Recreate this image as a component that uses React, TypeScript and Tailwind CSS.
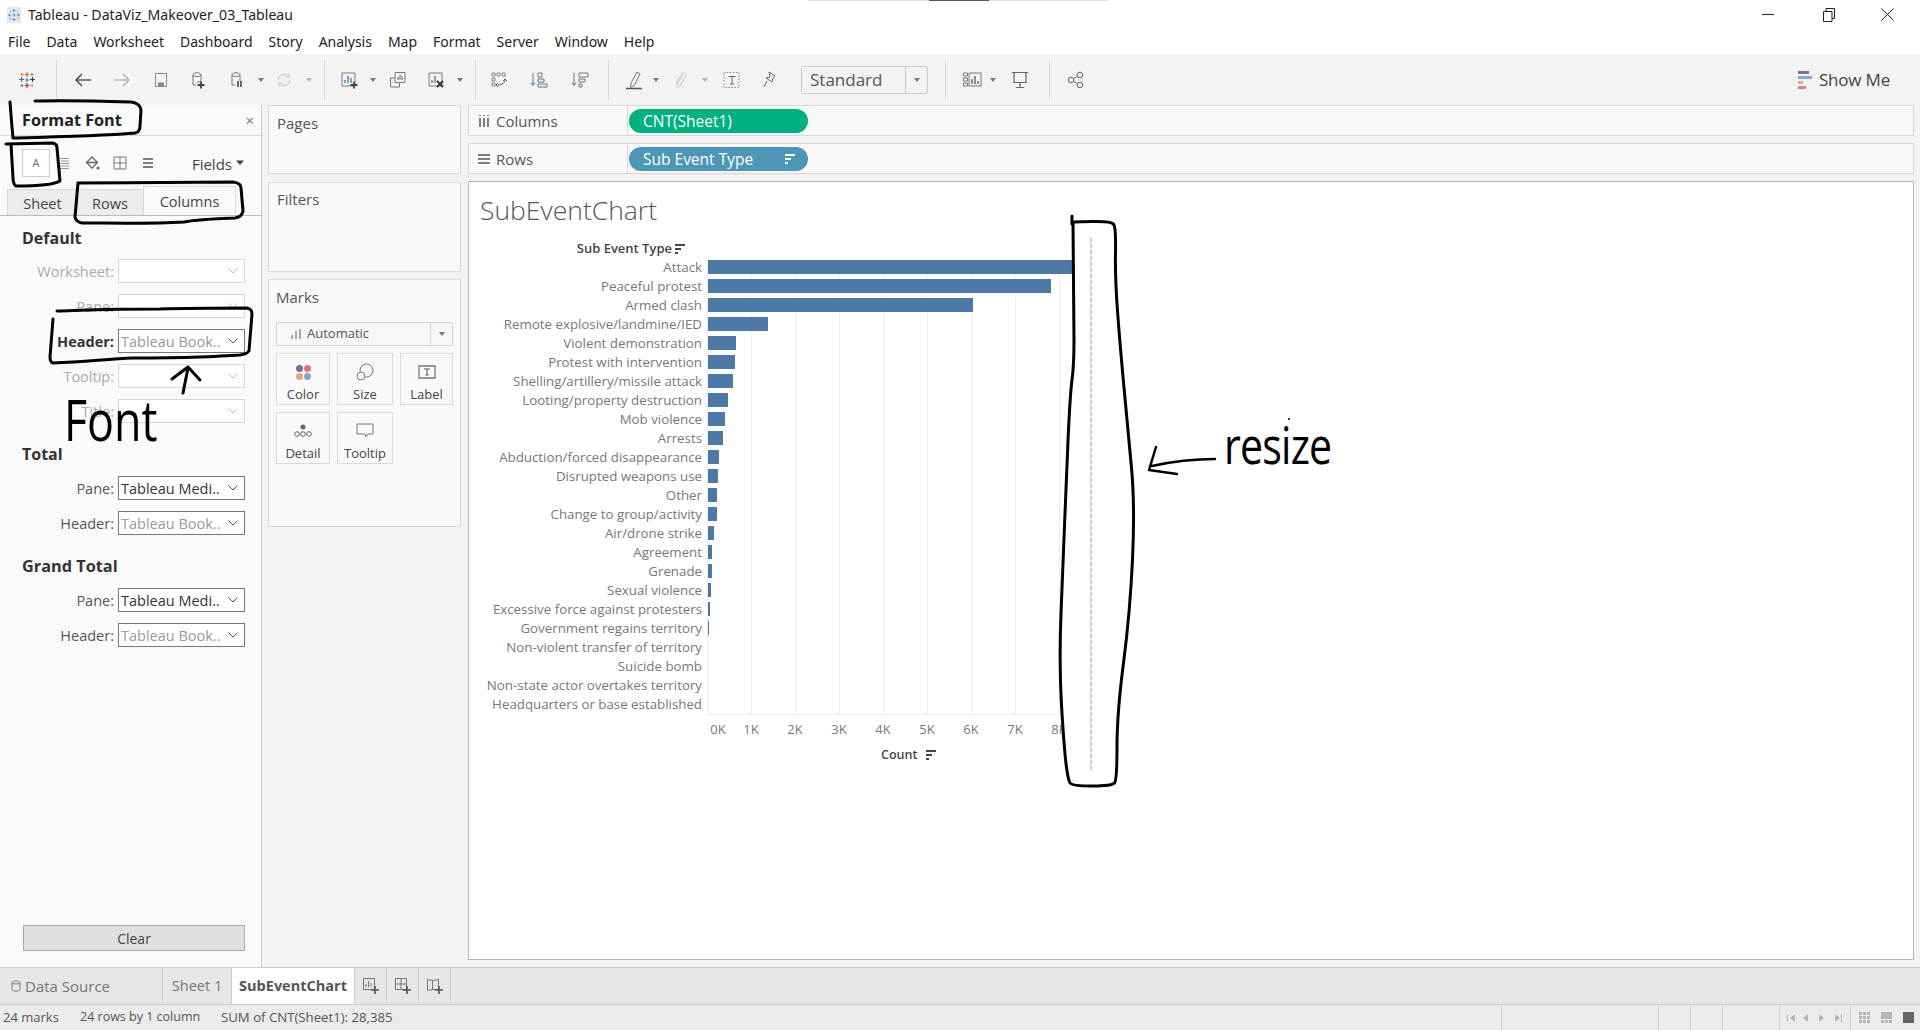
import React from "react";

const uiFont = "font-['Noto_Sans','Open_Sans',sans-serif]";
const tabFont = "font-['Open_Sans','Noto_Sans',sans-serif]";

const G = ({ children, className = "", w = 20, h = 20 }: { children: React.ReactNode; className?: string; w?: number; h?: number }) => (
  <svg width={w} height={h} viewBox={`0 0 ${w} ${h}`} fill="none" stroke="#666" strokeWidth="1" className={"shrink-0 " + className}>
    {children}
  </svg>
);

const Drop = ({ className = "" }: { className?: string }) => (
  <svg width="8" height="6" viewBox="0 0 8 6" className={"shrink-0 " + className}>
    <path d="M1 1h6L4 5z" fill="#777" />
  </svg>
);

const Sep = ({ className = "" }: { className?: string }) => <div className={"h-[40px] w-px bg-[#d6d6d6] shrink-0 " + className} />;

const Logo = () => (
  <G>
    <g strokeWidth="1.2">
      <path d="M10 2v5M7.700 4.500h4.600" stroke="#e8762d" />
      <path d="M10 13v5M7.700 15.500h4.600" stroke="#c72037" />
      <path d="M4.500 7v5M2 9.500h5" stroke="#5b6591" />
      <path d="M15.500 7v5M13 9.500h5" stroke="#1f447d" />
      <path d="M10 8v4M8 10h4" stroke="#5b879b" />
      <path d="M5 3v3M3.500 4.500h3" stroke="#eb912b" />
      <path d="M15 3v3M13.500 4.500h3" stroke="#7099a6" />
      <path d="M5 14v3M3.500 15.500h3" stroke="#59879b" />
      <path d="M15 14v3M13.500 15.500h3" stroke="#d7a32b" />
    </g>
  </G>
);

const TitleIcon = () => (
  <div className="w-[14px] h-[16px] bg-[#e4e7ea] flex items-center justify-center shrink-0">
    <svg width="12" height="12" viewBox="0 0 12 12" stroke="#4f9fc0" strokeWidth="1" fill="none">
      <path d="M6 0v3M4.500 1.500h3M6 9v3M4.500 10.500h3M0 6h3M1.500 4.500v3M9 6h3M10.500 4.500v3M6 4.500v3M4.500 6h3M2 2l1 1M9 2l1 1M2 10l1-1M9 10l1-1" />
    </svg>
  </div>
);

const Plus = ({ x = 12, y = 13 }: { x?: number; y?: number }) => (
  <path d={`M${x} ${y - 3.5}v7M${x - 3.5} ${y}h7`} stroke="#444" strokeWidth="1.8" />
);

const Toolbar = () => (
  <div className="h-[51px] bg-[#f3f3f3] flex items-center shrink-0">
    <div className="ml-[17px]"><Logo /></div>
    <Sep className="ml-[19px]" />
    <G className="ml-[16px]"><path d="M18 10H3M9 4l-6 6 6 6" stroke="#555" strokeWidth="1.6" /></G>
    <G className="ml-[19px]"><path d="M2 10h15M11 4l6 6-6 6" stroke="#bbb" strokeWidth="1.6" /></G>
    <G className="ml-[19px]"><path d="M4.500 3.500h11v13h-11z" stroke="#888" /><path d="M7 12.500h6v4H7z" fill="#888" stroke="none" /></G>
    <G className="ml-[17px]"><path d="M5 5c0-3 8-3 8 0v7H9M5 5v10h3M5 5c1 2 7 2 8 0" stroke="#777" /><Plus x={13} y={15} /></G>
    <G className="ml-[19px]"><path d="M5 5c0-3 8-3 8 0v6M5 5v10h3M5 5c1 2 7 2 8 0" stroke="#777" /><path d="M11 11v6M14 11v6" stroke="#444" strokeWidth="1.6" /></G>
    <Drop className="ml-[10px]" />
    <G className="ml-[9px]"><path d="M4 10a6 6 0 0 1 11-3M16 10a6 6 0 0 1-11 3M15 3v4h-4M5 17v-4h4" stroke="#c4c4c4" /></G>
    <Drop className="ml-[11px] opacity-50" />
    <Sep className="ml-[11px]" />
    <G className="ml-[14px]"><path d="M3 3h13v13H3z" stroke="#777" /><path d="M6 13v-3M9 13V6M12 13V8" stroke="#4c7ba8" strokeWidth="1.4" /><Plus x={15} y={15} /></G>
    <Drop className="ml-[10px]" />
    <G className="ml-[11px]"><path d="M7 2.500h10v10H7zM7 8H2.500v9h9v-4.500" stroke="#777" /><path d="M10 10V7M12 10V4.500M14 10V6" stroke="#666" /></G>
    <G className="ml-[18px]"><path d="M3 3h13v13H3z" stroke="#777" /><path d="M6 13v-3M9 13V6" stroke="#4c7ba8" strokeWidth="1.4" /><path d="M11 11l6 6M17 11l-6 6" stroke="#333" strokeWidth="1.8" /></G>
    <Drop className="ml-[10px]" />
    <Sep className="ml-[11px]" />
    <G className="ml-[13px]"><path d="M3 3h3v3H3zM8 3h3v3H8zM13 3h3v3h-3zM3 8h3v3H3zM3 13h3v3H3z" stroke="#888" /><path d="M16 9c0 4-3 6-7 6M9 13l-2 2 2 2M14 11l2-2 2 2" stroke="#555" /></G>
    <G className="ml-[20px]"><path d="M4 3v12M2 12.500l2 3 2-3" stroke="#4c7ba8" /><path d="M9 3h4v4H9zM9 9h6v3H9zM9 14h9v3H9z" stroke="#777" /></G>
    <G className="ml-[21px]"><path d="M4 3v12M2 12.500l2 3 2-3" stroke="#4c7ba8" /><path d="M9 3h9v4H9zM9 9h6v3H9zM9 14h3v3H9z" stroke="#777" /></G>
    <Sep className="ml-[18px]" />
    <G className="ml-[15px]"><path d="M7 13L13 2l3 2-5.500 11-4 2.500z" stroke="#777" /><path d="M2 18.500h16" stroke="#555" strokeWidth="1.5" /></G>
    <Drop className="ml-[8px]" />
    <G className="ml-[10px]"><path d="M13 5l-6 9c-2 3 2 4 3 2l6-10c1-3-3-4-4-2l-6 9" stroke="#c2c2c2" /></G>
    <Drop className="ml-[11px] opacity-50" />
    <G className="ml-[13px]"><path d="M2 2.500h15v15H2z" stroke="#888" strokeDasharray="1.500 1.500" /><path d="M6.500 6.500h7M10 6.500v7.500M8 14h4" stroke="#666" /></G>
    <G className="ml-[17px]"><path d="M10 2l6 4-2 2-1 4-6-4 4-1zM8 11l-3 6" stroke="#666" /></G>
    <div className="ml-[22px] w-[127px] h-[28px] border border-[#ccc] rounded-[2px] flex items-center shrink-0">
      <span className={"flex-1 pl-[8px] text-[17px] text-[#555] " + tabFont}>Standard</span>
      <div className="w-[22px] h-full border-l border-[#ccc] flex items-center justify-center"><Drop /></div>
    </div>
    <Sep className="ml-[17px]" />
    <G className="ml-[16px]"><path d="M1.500 3h4v3h-4zM1.500 8h4v3h-4zM1.500 13h4v3h-4zM7 3h12v13H7z" stroke="#777" /><path d="M10 14V9M13 14V6M16 14v-3" stroke="#555" strokeWidth="1.3" /></G>
    <Drop className="ml-[7px]" />
    <G className="ml-[13px]"><path d="M2 2.500h16M4 2.500v10h12v-10M10 12.500v5M6 17.500h8" stroke="#666" strokeWidth="1.2" /></G>
    <Sep className="ml-[19px]" />
    <G className="ml-[16px]"><circle cx="5" cy="10" r="2.800" /><circle cx="14" cy="5" r="2.800" /><circle cx="14" cy="15" r="2.800" /><path d="M7.500 8.700l4-2.500M7.500 11.300l4 2.500" /></G>
    <div className="ml-auto mr-[30px] flex items-center gap-[7px]">
      <div className="flex flex-col w-[14px]">
        <div className="h-[3px] w-[11px] bg-[#7b6f94] mb-[2px]" />
        <div className="h-[3px] w-[14px] bg-[#86a8cc] mb-[2px]" />
        <div className="h-[3px] w-[5px] bg-[#e4a98c] mb-[2px]" />
        <div className="h-[3px] w-[8px] bg-[#e5788a]" />
      </div>
      <span className={"text-[17px] text-[#444] tracking-[-0.2px] " + tabFont}>Show Me</span>
    </div>
  </div>
);

const Row = ({ label, value, labelCls = "text-[#aaa]", dark = false }: { label: string; value?: string; labelCls?: string; dark?: boolean }) => (
  <div className="flex items-center h-[24px]">
    <span className={"w-[114px] pt-px text-right text-[14.500px] whitespace-nowrap " + labelCls}>{label}</span>
    <div className={"ml-[4px] w-[127px] h-[24px] bg-white border flex items-center justify-between pl-[2px] pr-[6px] " + (value ? "border-[#777]" : "border-[#d6d6d6]")}>
      <span className={"pt-px text-[14.500px] whitespace-nowrap " + (dark ? "text-[#333]" : "text-[#999]")}>{value}</span>
      <svg width="10" height="6" viewBox="0 0 10 6" fill="none" stroke={value ? "#555" : "#bbb"} className="shrink-0"><path d="M.5.500l4.500 4.500L9.500.5" /></svg>
    </div>
  </div>
);

const LeftPanel = () => (
  <div className={"w-[262px] shrink-0 bg-[#fafafa] border-r border-[#c9c9c9] flex flex-col " + tabFont}>
    <div className="h-[31px] border-b border-[#d8d8d8] flex items-center justify-between pl-[22px] pr-[7px] shrink-0">
      <span className="text-[16.200px] font-bold text-[#222]">Format Font</span>
      <span className="text-[15px] text-[#777] leading-none">×</span>
    </div>
    <div className="h-[49px] flex items-start pt-[13px] pl-[22px] pr-[16px] shrink-0">
      <div className="w-[28px] h-[28px] border border-[#ccc] bg-white flex items-center justify-center text-[11px] text-[#666]">A</div>
      <G w={12} h={14} className="ml-[8px] mt-[7px]"><path d="M1 2.500h10M3 5h8M1 7.500h10M3 10h8M1 12.500h10" stroke="#999" /></G>
      <G w={16} h={16} className="ml-[14px] mt-[6px]"><path d="M8 2l5.500 5.500L8 13 2.500 7.500zM2.500 7.500h11" stroke="#666" strokeWidth="1.300" /><circle cx="14" cy="13" r="1.500" fill="#666" stroke="none" /></G>
      <G w={14} h={14} className="ml-[13px] mt-[7px]"><path d="M1 1h12v12H1zM7 1v12M1 7h12" stroke="#777" /></G>
      <G w={14} h={14} className="ml-[14px] mt-[7px]"><path d="M2 3h10M2 7h10M2 11h10" stroke="#555" strokeWidth="1.600" /></G>
      <span className="ml-auto text-[15px] text-[#444] mt-[4px]">Fields</span>
      <svg width="10" height="6" viewBox="0 0 10 6" className="ml-[3px] mt-[11px] shrink-0"><path d="M1 .5h8L5 5z" fill="#444" /></svg>
    </div>
    <div className="h-[31px] border-b border-[#bbb] flex items-end pl-[7px] shrink-0">
      <div className="w-[70px] h-[26px] pt-[3px] bg-[#ececec] border-t border-l border-[#d8d8d8] flex items-center justify-center text-[14.500px] text-[#444]">Sheet</div>
      <div className="w-[66px] h-[26px] pt-[3px] bg-[#ececec] border-t border-[#d8d8d8] flex items-center justify-center text-[14.500px] text-[#444]">Rows</div>
      <div className="w-[93px] h-[29px] bg-[#fafafa] border-t border-x border-[#d8d8d8] flex items-center justify-center text-[14.500px] text-[#444] pt-[1px]">Columns</div>
    </div>
    <div className="h-[43px] flex items-center pl-[22px] text-[16px] font-bold text-[#333] shrink-0">Default</div>
    <div className="flex flex-col gap-[11px]">
      <Row label="Worksheet:" />
      <Row label="Pane:" />
      <Row label="Header:" value="Tableau Book.." labelCls="font-bold text-[#333]" />
      <Row label="Tooltip:" />
      <Row label="Title:" />
    </div>
    <div className="h-[53px] pt-[8px] flex items-center pl-[22px] text-[16px] font-bold text-[#333] shrink-0">Total</div>
    <div className="flex flex-col gap-[11px]">
      <Row label="Pane:" value="Tableau Medi.." labelCls="text-[#555]" dark />
      <Row label="Header:" value="Tableau Book.." labelCls="text-[#555]" />
    </div>
    <div className="h-[53px] pt-[10px] flex items-center pl-[22px] text-[16.300px] font-bold text-[#333] shrink-0">Grand Total</div>
    <div className="flex flex-col gap-[11px]">
      <Row label="Pane:" value="Tableau Medi.." labelCls="text-[#555]" dark />
      <Row label="Header:" value="Tableau Book.." labelCls="text-[#555]" />
    </div>
    <div className="mt-auto mb-[16px] ml-[23px] w-[222px] h-[26px] bg-[#e0e0e0] border border-[#aaa] flex items-center justify-center text-[14px] text-[#444]">Clear</div>
  </div>
);

const MarkBtn = ({ w, label, children }: { w: string; label: string; children: React.ReactNode }) => (
  <div className={"h-[52px] border border-[#d9d9d9] flex flex-col items-center pt-[7px] " + w}>
    <div className="h-[22px] flex items-center justify-center">{children}</div>
    <span className="mt-[3px] text-[13px] text-[#444] leading-[16px]">{label}</span>
  </div>
);

const MiddlePanel = () => (
  <div className={"w-[206px] shrink-0 bg-[#f3f3f3] flex flex-col pl-[6px] " + tabFont}>
    <div className="w-[193px] h-[69px] bg-[#f9f9f9] border border-[#d9d9d9] pl-[8px] pt-[6px] text-[15px] text-[#555] shrink-0">Pages</div>
    <div className="mt-[8px] w-[193px] h-[90px] bg-[#f9f9f9] border border-[#d9d9d9] pl-[8px] pt-[5px] text-[15px] text-[#555] shrink-0">Filters</div>
    <div className="mt-[7px] w-[193px] h-[248px] bg-[#f9f9f9] border border-[#d9d9d9] px-[7px] pt-[6px] shrink-0">
      <div className="text-[15px] text-[#555] leading-[22px]">Marks</div>
      <div className="mt-[14px] h-[24px] border border-[#d4d4d4] rounded-[2px] bg-[#f7f7f7] flex items-center">
        <G w={12} h={12} className="ml-[13px]"><path d="M2 11V7M6 11V3M10 11V1" stroke="#aaa" strokeWidth="2" /></G>
        <span className="ml-[5px] text-[13px] text-[#555] flex-1">Automatic</span>
        <div className="w-[22px] h-full border-l border-[#d4d4d4] flex items-center justify-center"><Drop /></div>
      </div>
      <div className="mt-[7px] flex gap-[7px]">
        <MarkBtn w="w-[54px]" label="Color">
          <div className="grid grid-cols-2 gap-[1px]">
            <span className="w-[7px] h-[7px] rounded-full bg-[#7b6a94]" />
            <span className="w-[7px] h-[7px] rounded-full bg-[#ee6a82]" />
            <span className="w-[7px] h-[7px] rounded-full bg-[#eaa67c]" />
            <span className="w-[7px] h-[7px] rounded-full bg-[#7ba4cf]" />
          </div>
        </MarkBtn>
        <MarkBtn w="w-[56px]" label="Size">
          <G w={20} h={20}><circle cx="11.500" cy="8.500" r="6.500" stroke="#777" /><circle cx="6" cy="14" r="4" stroke="#777" fill="#f9f9f9" /></G>
        </MarkBtn>
        <MarkBtn w="w-[53px]" label="Label">
          <G w={18} h={16}><path d="M1 2h16v12H1z" stroke="#777" strokeWidth="1.300" /><path d="M6 5h6M9 5v6M7.500 11h3" stroke="#555" /></G>
        </MarkBtn>
      </div>
      <div className="mt-[7px] flex gap-[7px]">
        <MarkBtn w="w-[54px]" label="Detail">
          <G w={20} h={18}><circle cx="10" cy="5" r="2.500" fill="#666" stroke="none" /><circle cx="4" cy="12" r="2.300" /><circle cx="10" cy="12" r="2.300" /><circle cx="16" cy="12" r="2.300" /></G>
        </MarkBtn>
        <MarkBtn w="w-[56px]" label="Tooltip">
          <G w={18} h={18}><path d="M1 2h16v10h-5l-2 3-1-3H1z" stroke="#777" /></G>
        </MarkBtn>
      </div>
    </div>
  </div>
);

const Shelf = ({ label, icon, pill, pillCls, extra }: { label: string; icon: React.ReactNode; pill: string; pillCls: string; extra?: React.ReactNode }) => (
  <div className={"h-[31px] bg-[#f9f9f9] border border-[#d6d6d6] flex shrink-0 " + tabFont}>
    <div className="w-[159px] border-r border-[#d6d6d6] flex items-center pl-[9px] shrink-0">
      {icon}
      <span className="ml-[6px] pt-px text-[15px] text-[#555]">{label}</span>
    </div>
    <div className={"ml-[1px] mt-[3px] w-[179px] h-[24px] rounded-full flex items-center justify-between pl-[14px] pr-[12px] text-[15.500px] text-white " + pillCls}>
      <span className="pt-px">{pill}</span>
      {extra}
    </div>
  </div>
);

const SortIco = ({ c = "#444" }: { c?: string }) => (
  <svg width="12" height="10" viewBox="0 0 12 10" className="shrink-0">
    <path d="M1 0h10v2H1zM1 4h6v2H1zM1 8h3v2H1z" fill={c} />
  </svg>
);

const rows: [string, number][] = [
  ["Attack", 372], ["Peaceful protest", 343], ["Armed clash", 265], ["Remote explosive/landmine/IED", 60],
  ["Violent demonstration", 28], ["Protest with intervention", 27], ["Shelling/artillery/missile attack", 25],
  ["Looting/property destruction", 20], ["Mob violence", 17], ["Arrests", 15], ["Abduction/forced disappearance", 11],
  ["Disrupted weapons use", 10], ["Other", 9], ["Change to group/activity", 9], ["Air/drone strike", 6], ["Agreement", 4],
  ["Grenade", 4], ["Sexual violence", 3], ["Excessive force against protesters", 2], ["Government regains territory", 1],
  ["Non-violent transfer of territory", 0], ["Suicide bomb", 0], ["Non-state actor overtakes territory", 0], ["Headquarters or base established", 0],
];

const Chart = () => (
  <div className={"flex-1 bg-white border border-[#b5b5b5] flex flex-col " + tabFont}>
    <div className="h-[58px] flex items-center pl-[11px] text-[26.500px] font-light text-[#555] shrink-0">SubEventChart</div>
    <div className="h-[18px] w-[217px] flex items-center justify-end gap-[2px] text-[13px] font-semibold text-[#444] shrink-0">
      <span className="whitespace-nowrap">Sub Event Type</span>
      <SortIco />
    </div>
    <div className="flex shrink-0">
      <div className="w-[233px] shrink-0 flex flex-col">
        {rows.map(([l]) => (
          <div key={l} className="h-[19px] flex items-center justify-end text-[13.300px] text-[#777] whitespace-nowrap">{l}</div>
        ))}
      </div>
      <div className="ml-[5px] w-[380px] border-b border-[#ececec] bg-[linear-gradient(to_right,#eeeeee_1px,transparent_1px)] bg-[length:44px_100%] flex flex-col">
        {rows.map(([l, v]) => (
          <div key={l} className="h-[19px] pt-[2px] pl-px">
            {v > 0 && <div className="h-[14px] bg-[#4e79a7]" style={{ width: v }} />}
          </div>
        ))}
      </div>
    </div>
    <div className="ml-[238px] h-[30px] flex items-center text-[13px] text-[#777] shrink-0">
      <span className="w-[22px] text-center">0K</span>
      {["1K", "2K", "3K", "4K", "5K", "6K", "7K", "8K"].map((t) => (
        <span key={t} className="w-[44px] text-center">{t}</span>
      ))}
    </div>
    <div className="ml-[412px] h-[20px] flex items-center gap-[8px] text-[12.500px] font-semibold text-[#444] shrink-0">
      <span>Count</span>
      <SortIco />
    </div>
  </div>
);

const TabPlus = ({ children }: { children: React.ReactNode }) => (
  <div className="w-[32px] h-full border-r border-[#ccc] flex items-center justify-center">
    <G w={18} h={18}>{children}<path d="M13 9v8M9 13h8" stroke="#555" strokeWidth="1.600" /></G>
  </div>
);

const Tabs = () => (
  <div className={"h-[37px] bg-[#e6e6e6] border-t border-[#ccc] flex shrink-0 text-[15px] " + tabFont}>
    <div className="w-[163px] border-r border-[#ccc] flex items-center pl-[11px] text-[#777]">
      <svg width="10" height="12" viewBox="0 0 10 12" fill="none" stroke="#777" className="mr-[4px]"><path d="M1 2.500C1 .5 9 .5 9 2.500v7c0 2-8 2-8 0zM1 3c1.500 1.200 6.500 1.200 8 0" /></svg>
      Data Source
    </div>
    <div className="w-[69px] border-r border-[#ccc] flex items-center justify-center text-[#777] text-[14.500px]">Sheet 1</div>
    <div className="w-[123px] bg-white border-r border-[#ccc] flex items-center justify-center font-bold text-[#555] text-[14.500px]">SubEventChart</div>
    <TabPlus><path d="M1.500 1.500h11v11h-11z" stroke="#777" /><path d="M4 10V7M6.500 10V4M9 10V6" stroke="#777" /></TabPlus>
    <TabPlus><path d="M1.500 1.500h11v11h-11zM7 1.500v11M1.500 7h11" stroke="#777" /></TabPlus>
    <TabPlus><path d="M1.500 2.500l5 1 6-1v10h-6l-5 1zM6.500 3.500v9" stroke="#777" /></TabPlus>
  </div>
);

const Status = () => (
  <div className={"h-[26px] bg-[#ebebeb] border-t border-[#ccc] flex items-center shrink-0 text-[13px] text-[#555] " + tabFont}>
    <span className="ml-[3px] w-[77px] whitespace-nowrap">24 marks</span>
    <span className="w-[141px] whitespace-nowrap text-[12.500px]">24 rows by 1 column</span>
    <span className="whitespace-nowrap text-[13.200px]">SUM of CNT(Sheet1): 28,385</span>
    <div className="ml-auto flex h-full items-stretch">
      <div className="w-[157px] border-l border-[#d0d0d0]" />
      <div className="w-[32px] border-l border-[#d0d0d0]" />
      <div className="w-[32px] border-l border-[#d0d0d0]" />
      <div className="w-[57px] border-l border-[#d0d0d0]" />
      <div className="w-[71px] border-l border-[#d0d0d0] flex items-center pl-[7px] gap-[8px]">
        <svg width="56" height="10" viewBox="0 0 56 10" fill="#b5b5b5"><path d="M0 1h1v8H0zM8 1v8L3 5zM21 1v8l-5-4zM32 1v8l5-4zM48 1v8l5-4zM54 1h1v8h-1z" /></svg>
      </div>
      <div className="w-[70px] border-l border-[#d0d0d0] flex items-center pl-[8px] gap-[11px]">
        <div className="grid grid-cols-3 gap-px w-[11px]">
          {Array.from({ length: 9 }).map((_, i) => <span key={i} className="w-[3px] h-[3px] bg-[#b5b5b5]" />)}
        </div>
        <div className="w-[11px] flex flex-col gap-px">
          <div className="h-[7px] bg-[#b5b5b5]" />
          <div className="h-[3px] grid grid-cols-3 gap-px"><span className="bg-[#b5b5b5]" /><span className="bg-[#b5b5b5]" /><span className="bg-[#b5b5b5]" /></div>
        </div>
        <div className="w-[11px] h-[11px] bg-[#666]" />
      </div>
    </div>
  </div>
);

const smooth = (p: number[][]) => {
  let d = `M${p[0][0]} ${p[0][1]}`;
  for (let i = 1; i < p.length - 1; i++) {
    const mx = (p[i][0] + p[i + 1][0]) / 2;
    const my = (p[i][1] + p[i + 1][1]) / 2;
    d += `Q${p[i][0]} ${p[i][1]} ${mx} ${my}`;
  }
  const l = p[p.length - 1];
  return d + `L${l[0]} ${l[1]}`;
};

const shape = smooth([
  [1073, 222], [1074, 315], [1074, 365], [1070, 395], [1066, 487], [1063, 564], [1059, 663], [1064, 747], [1068, 780], [1072, 786],
  [1112, 786], [1117, 780], [1117, 713], [1130, 613], [1135, 506], [1128, 430], [1120, 345], [1115, 277], [1116, 227], [1111, 221], [1073, 222],
]);

const Ink = () => (
  <div className="absolute inset-0 pointer-events-none">
    <svg width="1920" height="1030" viewBox="0 0 1920 1030" fill="none" stroke="#000" strokeWidth="3" strokeLinecap="round" strokeLinejoin="round" className="absolute inset-0">
      <path d="M10 102C11 115 12 128 13 138C55 137 100 136 135 133Q140 132 140 126L141 110Q140 103 131 102C100 101 65 100 35 101" />
      <path d="M6 144L53 143Q57 144 57 148L60 181Q52 186 16 186Q13 184 13 178L11 144" />
      <path d="M78 183C130 183 190 182 233 182Q241 183 241 188L243 211Q242 217 235 218C215 219 200 219 184 222C150 224 110 223 82 223Q76 222 75 217L78 183" />
      <path d="M57 311C90 310 110 309 160 309C190 308 220 308 247 308Q252 309 252 314L249 351Q247 354 240 355C220 356 210 357 200 357C170 358 150 358 133 358C110 359 90 361 53 363Q50 362 50 357L53 319" />
      <path d="M183 393L188 368M172 379L188 367L200 380" />
      <path d={shape} fill="#fff" />
      <path d="M1072 216V224" />
      <path d="M1091 238V770" stroke="#999" strokeWidth="1" strokeDasharray="4 2" />
      <path d="M1215 459C1195 459 1170 462 1152 466M1156 447L1149 470L1177 474" strokeWidth="2.500" />
      <circle cx="1289" cy="419" r="1" fill="#000" stroke="none" />
    </svg>
    <span className="absolute left-[64px] top-[383px] text-[56px] leading-[72px] text-black font-['Open_Sans',sans-serif] font-normal origin-left scale-x-[0.8]">Font</span>
    <span className="absolute left-[1224px] top-[408px] text-[52px] leading-[72px] text-black font-['Open_Sans',sans-serif] font-normal origin-left scale-x-[0.79] tracking-[-1px]">resize</span>
  </div>
);

export default function App() {
  return (
    <div className={"relative w-[1920px] h-[1030px] overflow-hidden bg-white flex flex-col " + uiFont}>
      <div className="relative h-[27px] pt-[2px] flex items-center pl-[7px] shrink-0">
        <TitleIcon />
        <span className="ml-[7px] text-[14.100px] text-[#222]">Tableau - DataViz_Makeover_03_Tableau</span>
        <div className="absolute left-[808px] top-0 w-[300px] h-px bg-[#e0e0e0]" />
        <div className="absolute left-[929px] top-0 w-[60px] h-px bg-[#555]" />
        <div className="ml-auto flex items-center">
          <svg width="12" height="12" viewBox="0 0 12 12" stroke="#222" className="mr-[49px]"><path d="M0 5.500h12" /></svg>
          <svg width="12" height="14" viewBox="0 0 12 14" stroke="#222" fill="none" className="mr-[46px]"><path d="M.5 3.500h8.500v10H.5zM3 3.500V.5h8.500v10H9" /></svg>
          <svg width="13" height="13" viewBox="0 0 13 13" stroke="#222" fill="none" className="mr-[26px]"><path d="M.5.500l12 12M12.500.5l-12 12" /></svg>
        </div>
      </div>
      <div className="h-[27px] pt-[1px] flex items-center pl-[8px] gap-[16px] text-[14px] text-[#222] shrink-0">
        {["File", "Data", "Worksheet", "Dashboard", "Story", "Analysis", "Map", "Format", "Server", "Window", "Help"].map((m) => (
          <span key={m}>{m}</span>
        ))}
      </div>
      <Toolbar />
      <div className="flex-1 flex min-h-0">
        <LeftPanel />
        <MiddlePanel />
        <div className="flex-1 bg-[#f3f3f3] flex flex-col pr-[6px] pb-[7px]">
          <Shelf label="Columns" icon={<G w={12} h={14}><path d="M2 4v9M6 4v9M10 4v9M2 1v1M6 1v1M10 1v1" stroke="#555" strokeWidth="1.500" /></G>} pill="CNT(Sheet1)" pillCls="bg-[#00b180]" />
          <div className="h-[7px] shrink-0" />
          <Shelf label="Rows" icon={<G w={12} h={14}><path d="M0 3h12M0 7h12M0 11h12" stroke="#555" strokeWidth="1.300" /></G>} pill="Sub Event Type" pillCls="bg-[#4e96b5]" extra={<SortIco c="#fff" />} />
          <div className="h-[7px] shrink-0" />
          <Chart />
        </div>
      </div>
      <Tabs />
      <Status />
      <Ink />
    </div>
  );
}
